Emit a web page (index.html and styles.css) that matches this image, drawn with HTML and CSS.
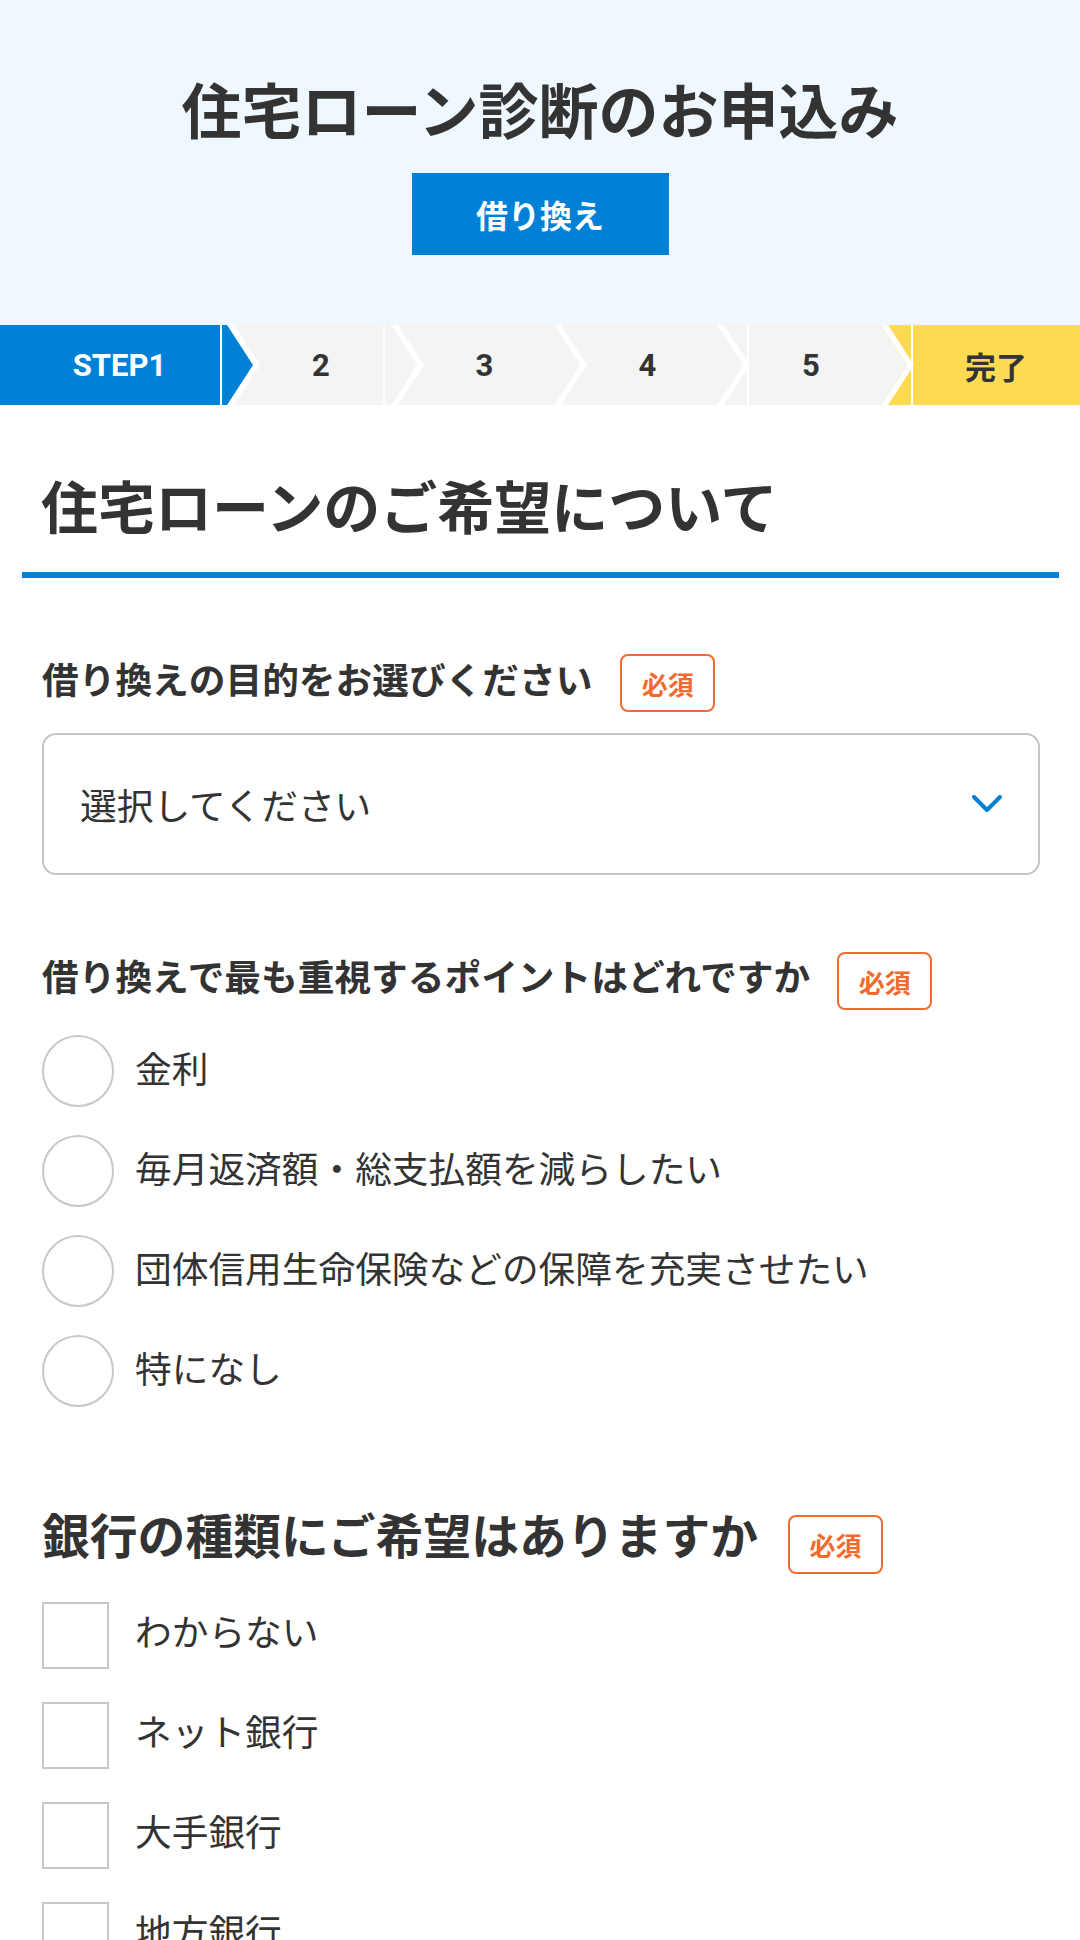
FILE: index.html
```html
<!DOCTYPE html>
<html lang="ja">
<head>
<meta charset="utf-8">
<title>住宅ローン診断のお申込み</title>
<link rel="stylesheet" href="styles.css">
</head>
<body>
<header class="hero">
  <h1 class="hero-title">住宅ローン診断のお申込み</h1>
  <div class="hero-tag">借り換え</div>
</header>

<ol class="steps">
  <li class="step step-current line-r1">
    <span>STEP1</span>
    <svg class="arrow" viewBox="0 0 40 80" aria-hidden="true"><polygon class="arrow-edge" points="5,0 12,0 38,40 12,80 5,80 31,40"/><polygon class="arrow-fill" points="0,0 5,0 31,40 5,80 0,80"/></svg>
  </li>
  <li class="step line-r2">
    <span>2</span>
    <svg class="arrow" viewBox="0 0 40 80" aria-hidden="true"><polygon class="arrow-edge" points="5,0 12,0 38,40 12,80 5,80 31,40"/><polygon class="arrow-fill" points="0,0 5,0 31,40 5,80 0,80"/></svg>
  </li>
  <li class="step">
    <span>3</span>
    <svg class="arrow" viewBox="0 0 40 80" aria-hidden="true"><polygon class="arrow-edge" points="5,0 12,0 38,40 12,80 5,80 31,40"/><polygon class="arrow-fill" points="0,0 5,0 31,40 5,80 0,80"/></svg>
  </li>
  <li class="step">
    <span>4</span>
    <svg class="arrow" viewBox="0 0 40 80" aria-hidden="true"><polygon class="arrow-edge" points="5,0 12,0 38,40 12,80 5,80 31,40"/><polygon class="arrow-fill" points="0,0 5,0 31,40 5,80 0,80"/></svg>
  </li>
  <li class="step line-l">
    <span>5</span>
    <svg class="arrow" viewBox="0 0 40 80" aria-hidden="true"><polygon class="arrow-edge" points="5,0 12,0 38,40 12,80 5,80 31,40"/><polygon class="arrow-fill" points="0,0 5,0 31,40 5,80 0,80"/></svg>
  </li>
  <li class="step step-done line-l">
    <span>完了</span>
  </li>
</ol>

<main class="content">
  <h2 class="section-title">住宅ローンのご希望について</h2>

  <div class="form">
    <div class="q-row q-row-first">
      <span class="q-label">借り換えの目的をお選びください</span>
      <span class="badge">必須</span>
    </div>
    <div class="select">
      <span class="select-text">選択してください</span>
      <svg class="select-caret" viewBox="0 0 30 18" aria-hidden="true"><polyline points="2,2 15,15 28,2"/></svg>
    </div>

    <div class="q-row q-row-second">
      <span class="q-label">借り換えで最も重視するポイントはどれですか</span>
      <span class="badge badge-second">必須</span>
    </div>
    <ul class="options radios">
      <li class="option"><span class="radio"></span><span class="option-text">金利</span></li>
      <li class="option"><span class="radio"></span><span class="option-text">毎月返済額・総支払額を減らしたい</span></li>
      <li class="option"><span class="radio"></span><span class="option-text">団体信用生命保険などの保障を充実させたい</span></li>
      <li class="option"><span class="radio"></span><span class="option-text">特になし</span></li>
    </ul>

    <div class="q-row q-row-big">
      <span class="q-label q-label-big">銀行の種類にご希望はありますか</span>
      <span class="badge badge-big">必須</span>
    </div>
    <ul class="options checks">
      <li class="option option-check"><span class="checkbox"></span><span class="option-text">わからない</span></li>
      <li class="option option-check"><span class="checkbox"></span><span class="option-text">ネット銀行</span></li>
      <li class="option option-check"><span class="checkbox"></span><span class="option-text">大手銀行</span></li>
      <li class="option option-check"><span class="checkbox"></span><span class="option-text">地方銀行</span></li>
    </ul>
  </div>
</main>
</body>
</html>
```

FILE: styles.css
```css
* {
  box-sizing: border-box;
  margin: 0;
  padding: 0;
}

html, body {
  background: #fff;
}

body {
  width: 1080px;
  font-family: Roboto, "Noto Sans CJK JP", sans-serif;
  color: #333;
}

/* ---------- hero ---------- */
.hero {
  height: 325px;
  background: #eef8fe;
  display: flex;
  flex-direction: column;
  align-items: center;
  padding-top: 72px;
}

.hero-title {
  font-family: "Noto Sans CJK JP", sans-serif;
  font-size: 60px;
  line-height: 72px;
  font-weight: 700;
  color: #333;
}

.hero-tag {
  margin-top: 29px;
  width: 257px;
  height: 82px;
  background: #0081d6;
  color: #fff;
  font-family: "Noto Sans CJK JP", sans-serif;
  font-size: 32px;
  font-weight: 700;
  display: flex;
  align-items: center;
  justify-content: center;
}

/* ---------- steps ---------- */
.steps {
  list-style: none;
  display: flex;
  height: 80px;
}

.step {
  position: relative;
  background: #f4f4f4;
  display: flex;
  align-items: center;
  justify-content: center;
  padding-left: 34px;
  font-size: 31px;
  font-weight: 700;
  color: #333;
  width: 163px;
  flex: none;
}

.step:nth-child(1) { width: 222px; padding-left: 17px; }
.step:nth-child(2) { width: 164px; }
.step:nth-child(5) { width: 164px; }
.step:nth-child(6) { width: auto; flex: 1; padding-left: 36px; }

.step span {
  position: relative;
  z-index: 4;
}

.step-current {
  background: #0081d6;
  color: #fff;
}

.step-done {
  background: #fed952;
  font-family: "Noto Sans CJK JP", sans-serif;
}

.arrow {
  position: absolute;
  top: 0;
  left: 100%;
  width: 40px;
  height: 80px;
  z-index: 2;
}

.arrow-edge { fill: #fff; }
.arrow-fill { fill: #f4f4f4; }
.step-current .arrow-fill { fill: #0081d6; }

.line-r1::before,
.line-r2::before,
.line-l::before {
  content: "";
  position: absolute;
  top: 0;
  bottom: 0;
  width: 2px;
  background: #fff;
  z-index: 3;
}

.line-r1::before { right: 0; }
.line-r2::before { right: 1px; }
.line-l::before { left: 35px; }

/* ---------- content ---------- */
.section-title {
  margin: 63px 21px 0 22px;
  padding: 0 0 31px 19px;
  border-bottom: 6px solid #0081d6;
  font-family: "Noto Sans CJK JP", sans-serif;
  font-size: 57px;
  line-height: 73px;
  font-weight: 700;
  color: #333;
}

.form {
  padding: 0 40px 0 42px;
  font-family: "Noto Sans CJK JP", sans-serif;
}

.q-row {
  display: flex;
  align-items: flex-start;
  margin-top: 75px;
}

.q-label {
  font-size: 36.7px;
  line-height: 50px;
  font-weight: 700;
  color: #333;
  white-space: nowrap;
}

.badge {
  flex: none;
  margin-left: 28px;
  margin-top: 1px;
  width: 95px;
  height: 58px;
  border: 2px solid #f26a2d;
  border-radius: 8px;
  color: #f26a2d;
  font-size: 26px;
  font-weight: 700;
  display: flex;
  align-items: center;
  justify-content: center;
}

.badge-second {
  margin-left: 27px;
  margin-top: 2px;
}

.q-row-big {
  margin-top: 96px;
}

.q-label-big {
  font-size: 47.8px;
  line-height: 62px;
}

.badge-big {
  margin-left: 30px;
  margin-top: 12px;
  height: 59px;
}

/* select */
.select {
  margin-top: 21px;
  height: 142px;
  border: 2px solid #c6c6c6;
  border-radius: 14px;
  display: flex;
  align-items: center;
  justify-content: space-between;
  padding: 0 36px 0 36px;
}

.select-text {
  font-size: 36.7px;
  line-height: 50px;
  color: #333;
}

.select-caret {
  width: 30px;
  height: 18px;
  fill: none;
  stroke: #0081d6;
  stroke-width: 4;
  stroke-linecap: round;
  stroke-linejoin: round;
}

/* options */
.options {
  list-style: none;
  display: flex;
  flex-direction: column;
}

.radios {
  margin-top: 25px;
  gap: 28px;
}

.checks {
  margin-top: 28px;
  gap: 33px;
}

.option {
  display: flex;
  align-items: center;
  height: 72px;
}

.option-check {
  height: 67px;
}

.radio {
  flex: none;
  width: 72px;
  height: 72px;
  border: 2px solid #c8c8c8;
  border-radius: 50%;
  background: #fff;
}

.checkbox {
  flex: none;
  width: 67px;
  height: 67px;
  border: 2px solid #c8c8c8;
  background: #fff;
}

.option-text {
  margin-left: 21px;
  margin-bottom: 8px;
  font-size: 36.7px;
  line-height: 50px;
  color: #333;
  white-space: nowrap;
}

.option-check .option-text {
  margin-left: 26px;
  margin-bottom: 12px;
}
```
